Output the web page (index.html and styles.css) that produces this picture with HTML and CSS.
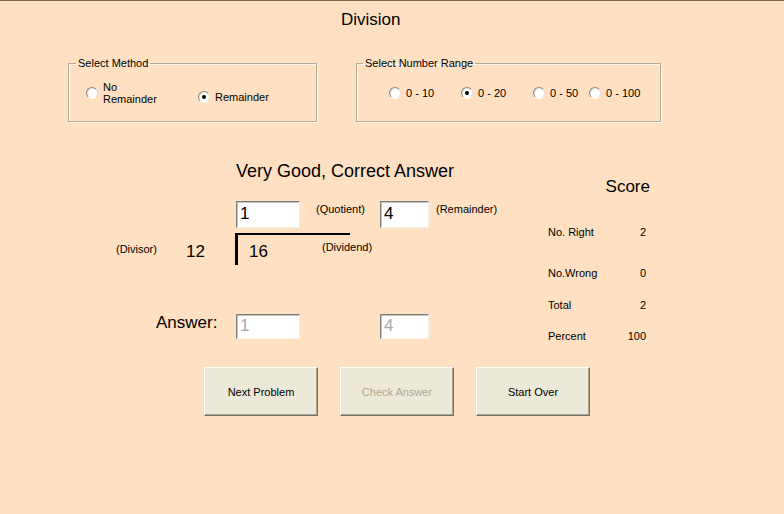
FILE: index.html
```html
<!DOCTYPE html>
<html lang="en">
<head>
  <meta charset="UTF-8">
  <title>Division</title>
  <link rel="stylesheet" href="styles.css">
</head>
<body>
  <div class="form">
    <h1 class="title">Division</h1>

    <div class="options">
      <fieldset class="frame frame-method">
        <legend>Select Method</legend>
        <label class="opt opt-wide">
          <span class="radio"></span>
          <span class="opt-text">No<br>Remainder</span>
        </label>
        <label class="opt opt-low">
          <span class="radio checked"></span>
          <span class="opt-text">Remainder</span>
        </label>
      </fieldset>

      <fieldset class="frame frame-range">
        <legend>Select Number Range</legend>
        <label class="opt w72"><span class="radio"></span><span class="opt-text">0 - 10</span></label>
        <label class="opt w72"><span class="radio checked"></span><span class="opt-text">0 - 20</span></label>
        <label class="opt w56"><span class="radio"></span><span class="opt-text">0 - 50</span></label>
        <label class="opt"><span class="radio"></span><span class="opt-text">0 - 100</span></label>
      </fieldset>
    </div>

    <div class="main">
      <div class="work">
        <div class="message">Very Good, Correct Answer</div>

        <div class="row row-quotient">
          <div class="box box-q">1</div>
          <span class="small lbl-q">(Quotient)</span>
          <div class="box box-r">4</div>
          <span class="small lbl-r">(Remainder)</span>
        </div>

        <div class="row row-problem">
          <span class="small lbl-divisor">(Divisor)</span>
          <span class="big divisor">12</span>
          <div class="bracket">
            <span class="big dividend">16</span>
            <span class="small lbl-dividend">(Dividend)</span>
          </div>
        </div>

        <div class="row row-answer">
          <span class="big lbl-answer">Answer:</span>
          <div class="box box-q box-off">1</div>
          <div class="box box-r box-off">4</div>
        </div>

        <div class="row buttons">
          <button class="btn">Next Problem</button>
          <button class="btn" disabled>Check Answer</button>
          <button class="btn">Start Over</button>
        </div>
      </div>

      <div class="score">
        <div class="score-title">Score</div>
        <div class="score-row first"><span>No. Right</span><span>2</span></div>
        <div class="score-row gap41"><span>No.Wrong</span><span>0</span></div>
        <div class="score-row gap32"><span>Total</span><span>2</span></div>
        <div class="score-row gap31"><span>Percent</span><span>100</span></div>
      </div>
    </div>
  </div>
</body>
</html>
```

FILE: styles.css
```css
html, body { margin: 0; padding: 0; }
body { background: #ffe0c2; border-top: 1px solid #7d6450; font-family: "Liberation Sans", Arial, sans-serif; color: #000; min-height: 513px; }
.form { width: 784px; }

.title { margin: 0; padding: 9px 0 0 341px; font-size: 17px; line-height: 20px; font-weight: normal; height: 20px; }

.options { display: flex; margin-top: 27px; padding-left: 68px; }
.frame { margin: 0; border: 1px solid #b4ab9c; box-shadow: inset 1px 1px 0 #fff4ea, 1px 1px 0 #fff4ea; display: flex; align-items: flex-start; font-size: 11px; line-height: 12px; }
.frame legend { padding: 0 2px; line-height: 13px; font-size: 11px; }
.frame-method { width: 249px; box-sizing: border-box; padding: 11px 0 16px 17px; }
.frame-method legend { margin-left: -10px; }
.frame-range { width: 305px; box-sizing: border-box; margin-left: 39px; padding: 17px 0 22px 32px; }
.frame-range legend { margin-left: -26px; }

.opt { display: flex; align-items: center; flex: none; }
.opt-wide { width: 112px; }
.opt-low { margin-top: 10px; }
.w72 { width: 72px; }
.w56 { width: 56px; }
.opt-text { margin-left: 5px; white-space: nowrap; }
.radio { width: 12px; height: 12px; box-sizing: border-box; border-radius: 50%; border: 1px solid; border-color: #8c8880 #e4e0d8 #fff #8c8880; background: radial-gradient(circle at 62% 62%, #fff 0 45%, #d8d4cc 100%); position: relative; flex: none; }
.radio.checked::after { content: ""; position: absolute; left: 3px; top: 3px; width: 4px; height: 4px; border-radius: 50%; background: #000; }

.main { display: flex; }
.work { width: 548px; flex: none; }
.message { margin: 39px 0 0 236px; font-size: 18px; line-height: 21px; height: 21px; }

.row { display: flex; align-items: flex-start; }
.row > * { flex: none; }
.small { font-size: 11px; line-height: 13px; white-space: nowrap; }
.big { font-size: 17px; line-height: 20px; }

.box { box-sizing: border-box; height: 27px; background: #fff; border: 1px solid; border-color: #7c7c7c #f4f0ea #f4f0ea #7c7c7c; box-shadow: inset 1px 1px 0 #c8c4bc; font-size: 17px; line-height: 24px; padding-left: 3px; }
.box-q { width: 64px; }
.box-r { width: 49px; }
.box-off { color: #a8a8a8; height: 25px; line-height: 22px; margin-top: 1px; }

.row-quotient { margin-top: 19px; padding-left: 236px; height: 27px; }
.lbl-q { margin: 2px 0 0 16px; width: 64px; }
.lbl-r { margin: 2px 0 0 7px; }

.row-problem { margin-top: 5px; height: 32px; }
.lbl-divisor { margin: 10px 0 0 116px; width: 70px; }
.divisor { margin-top: 9px; width: 49px; }
.bracket { box-sizing: border-box; width: 115px; height: 32px; border-left: 3px solid #000; border-top: 2px solid #000; display: flex; align-items: flex-start; }
.bracket > * { flex: none; }
.dividend { margin: 7px 0 0 11px; width: 73px; }
.lbl-dividend { margin-top: 6px; }

.row-answer { margin-top: 48px; height: 26px; }
.lbl-answer { margin-left: 156px; width: 80px; }
.row-answer .box-r { margin-left: 80px; }

.buttons { margin-top: 28px; padding-left: 204px; gap: 22px; }
.btn { width: 114px; height: 49px; background: #ece9d8; border: 1px solid; border-color: #fff #716f64 #716f64 #fff; box-shadow: inset -1px -1px 0 #aca899; font-family: "Liberation Sans", Arial, sans-serif; font-size: 11px; color: #000; padding: 0; }
.btn:disabled { color: #aca899; }

.score { width: 102px; margin-top: 55px; font-size: 11px; line-height: 13px; }
.score-title { font-size: 17px; line-height: 20px; text-align: right; }
.score-row { display: flex; justify-content: space-between; padding-right: 4px; }
.score-row.first { margin-top: 29px; }
.gap41 { margin-top: 28px; }
.gap32 { margin-top: 19px; }
.gap31 { margin-top: 18px; }
```
